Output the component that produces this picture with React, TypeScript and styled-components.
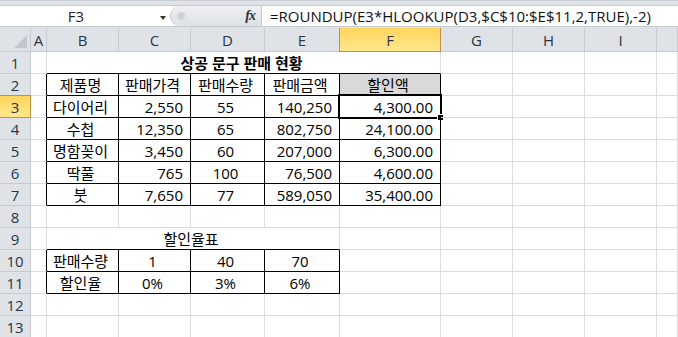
import { createGlobalStyle, styled } from 'styled-components';

const GlobalStyle = createGlobalStyle`
    html, body {
        margin: 0;
        padding: 0;
        background: #ffffff;
        overflow: hidden;
    }
`;

const Frame = styled.div`
    width: 678px;
    height: 337px;
    overflow: hidden;
    display: flex;
    flex-direction: column;
    background: #dfe3e8;
    font-family: "Open Sans", "Noto Sans CJK KR", sans-serif;
`;

const RibbonEdge = styled.div`
    height: 3px;
    background: #eceef1;
    border-bottom: 1px solid #c9ced5;
    display: flex;
`;

const RibbonDivider = styled.div`
    width: 135px;
    border-right: 1px solid #c9ced5;
`;

const FormulaRow = styled.div`
    margin-top: 4px;
    height: 22px;
    display: flex;
    align-items: stretch;
    background: #ffffff;
    border-top: 1px solid #c5cad1;
    border-bottom: 1px solid #c5cad1;
`;

const NameBox = styled.div`
    width: 172px;
    position: relative;
    display: flex;
    align-items: center;
    justify-content: center;
    font-size: 15px;
    color: #1e1e1e;
    padding-right: 20px;
    box-sizing: border-box;
`;

const DropArrow = styled.span`
    position: absolute;
    right: 6px;
    top: 10px;
    width: 0;
    height: 0;
    border-left: 3px solid transparent;
    border-right: 3px solid transparent;
    border-top: 4px solid #333;
`;

const FxPill = styled.div`
    width: 92px;
    display: flex;
    align-items: center;
    justify-content: space-between;
    background: linear-gradient(#eef0f3, #dde1e6);
    border-radius: 12px 0 0 12px;
    border-left: 1px solid #c5cad1;
    border-right: 1px solid #c5cad1;
    margin-left: -2px;
    padding: 0 6px 0 5px;
    box-sizing: border-box;
`;

const Knob = styled.span`
    width: 8px;
    height: 8px;
    border-radius: 50%;
    background: #cfd3d9;
    border: 1px solid #e9ebee;
`;

const FxLabel = styled.span`
    font-family: "Liberation Serif", serif;
    font-style: italic;
    font-weight: 700;
    font-size: 14px;
    color: #333;
    letter-spacing: -1px;
`;

const FormulaText = styled.div`
    flex: 1;
    display: flex;
    align-items: center;
    padding-left: 8px;
    font-size: 15px;
    color: #111;
    white-space: nowrap;
`;

const Sheet = styled.div`
    margin-top: 1px;
    display: grid;
    grid-template-columns: 31px 16px 72px 72px 74px 75px 101px 72px 72px 72px 1fr;
    grid-template-rows: 24px;
    grid-auto-rows: 22px;
    background: #ffffff;
`;

const Corner = styled.div`
    background: #dfe3e8;
    border-right: 1px solid #c5cad1;
    border-bottom: 1px solid #c5cad1;
    position: relative;
    &::after {
        content: '';
        position: absolute;
        right: 3px;
        bottom: 3px;
        border-left: 13px solid transparent;
        border-bottom: 13px solid #c3c8cf;
    }
`;

const ColHead = styled.div<{ $active?: boolean }>`
    display: flex;
    align-items: center;
    justify-content: center;
    font-size: 15px;
    color: #2a3445;
    background: ${(p) => (p.$active ? 'linear-gradient(#ffd55c, #ffe88e)' : '#dfe3e8')};
    border-right: 1px solid ${(p) => (p.$active ? '#c2913f' : '#c5cad1')};
    border-bottom: 1px solid ${(p) => (p.$active ? '#c2913f' : '#c5cad1')};
    border-left: ${(p) => (p.$active ? '1px solid #c2913f' : '0')};
    margin-left: ${(p) => (p.$active ? '-1px' : '0')};
`;

const RowHead = styled.div<{ $active?: boolean }>`
    display: flex;
    align-items: center;
    justify-content: center;
    font-size: 15px;
    color: #2a3445;
    background: ${(p) => (p.$active ? 'linear-gradient(#ffd55c, #ffe88e)' : '#dfe3e8')};
    border-right: 1px solid ${(p) => (p.$active ? '#c2913f' : '#c5cad1')};
    border-bottom: 1px solid ${(p) => (p.$active ? '#c2913f' : '#c5cad1')};
    border-top: ${(p) => (p.$active ? '1px solid #c2913f' : '0')};
    margin-top: ${(p) => (p.$active ? '-1px' : '0')};
`;

type Align = 'left' | 'center' | 'right';

const Cell = styled.div<{
    $align?: Align;
    $span?: number;
    $r?: boolean;
    $b?: boolean;
    $fill?: string;
    $bold?: boolean;
    $active?: boolean;
}>`
    grid-column: span ${(p) => p.$span ?? 1};
    position: relative;
    display: flex;
    align-items: center;
    justify-content: ${(p) =>
        p.$align === 'right' ? 'flex-end' : p.$align === 'center' ? 'center' : 'flex-start'};
    padding: 0 7px 0 3px;
    box-sizing: border-box;
    font-size: 15px;
    font-weight: ${(p) => (p.$bold ? 700 : 400)};
    color: #000;
    white-space: nowrap;
    background: ${(p) => p.$fill ?? 'transparent'};
    border-right: 1px solid ${(p) => (p.$r ? '#000' : '#dadcdd')};
    border-bottom: 1px solid ${(p) => (p.$b ? '#000' : '#dadcdd')};
    ${(p) =>
        p.$active &&
        `
        &::before {
            content: '';
            position: absolute;
            top: -2px;
            left: -2px;
            right: -2px;
            bottom: -2px;
            border: 2px solid #000;
            box-shadow: inset 0 0 0 1px #fff;
            pointer-events: none;
        }
        &::after {
            content: '';
            position: absolute;
            right: -4px;
            bottom: -4px;
            width: 5px;
            height: 5px;
            background: #000;
            border: 1px solid #fff;
        }
    `}
`;

type CellDef = {
    text?: string;
    align?: Align;
    span?: number;
    r?: boolean;
    b?: boolean;
    fill?: string;
    bold?: boolean;
    active?: boolean;
};

const columns = ['A', 'B', 'C', 'D', 'E', 'F', 'G', 'H', 'I', ''];

const products = [
    ['다이어리', '2,550', '55', '140,250', '4,300.00'],
    ['수첩', '12,350', '65', '802,750', '24,100.00'],
    ['명함꽂이', '3,450', '60', '207,000', '6,300.00'],
    ['딱풀', '765', '100', '76,500', '4,600.00'],
    ['붓', '7,650', '77', '589,050', '35,400.00'],
];

const empty = (n: number, opts: Partial<CellDef> = {}): CellDef[] =>
    Array.from({ length: n }, () => ({ ...opts }));

const buildRows = (): CellDef[][] => {
    const rows: CellDef[][] = [];
    // row 1: title centered over B:F
    rows.push([
        {},
        { text: '상공 문구 판매 현황', align: 'center', span: 5, bold: true, b: true },
        ...empty(4),
    ]);
    // row 2: table heads
    rows.push([
        { r: true },
        { text: '제품명', align: 'center', r: true, b: true },
        { text: '판매가격', align: 'center', r: true, b: true },
        { text: '판매수량', align: 'center', r: true, b: true },
        { text: '판매금액', align: 'center', r: true, b: true },
        { text: '할인액', align: 'center', r: true, b: true, fill: '#d9d9d9' },
        ...empty(4),
    ]);
    products.forEach((p, i) => {
        rows.push([
            { r: true },
            { text: p[0], align: 'center', r: true, b: true },
            { text: p[1], align: 'right', r: true, b: true },
            { text: p[2], align: 'center', r: true, b: true },
            { text: p[3], align: 'right', r: true, b: true },
            { text: p[4], align: 'right', r: true, b: true, active: i === 0 },
            ...empty(4),
        ]);
    });
    // row 8
    rows.push(empty(10));
    // row 9: discount table caption over B:E
    rows.push([
        {},
        { text: '할인율표', align: 'center', span: 4, b: true },
        ...empty(5),
    ]);
    rows.push([
        { r: true },
        { text: '판매수량', align: 'center', r: true, b: true },
        { text: '1', align: 'center', r: true, b: true },
        { text: '40', align: 'center', r: true, b: true },
        { text: '70', align: 'center', r: true, b: true },
        ...empty(5),
    ]);
    rows.push([
        { r: true },
        { text: '할인율', align: 'center', r: true, b: true },
        { text: '0%', align: 'center', r: true, b: true },
        { text: '3%', align: 'center', r: true, b: true },
        { text: '6%', align: 'center', r: true, b: true },
        ...empty(5),
    ]);
    rows.push(empty(10));
    rows.push(empty(10));
    return rows;
};

const App = () => {
    const rows = buildRows();

    return (
        <Frame>
            <GlobalStyle />
            <RibbonEdge>
                <RibbonDivider />
            </RibbonEdge>
            <FormulaRow>
                <NameBox>
                    F3
                    <DropArrow />
                </NameBox>
                <FxPill>
                    <Knob />
                    <FxLabel>fx</FxLabel>
                </FxPill>
                <FormulaText>=ROUNDUP(E3*HLOOKUP(D3,$C$10:$E$11,2,TRUE),-2)</FormulaText>
            </FormulaRow>
            <Sheet>
                <Corner />
                {columns.map((c, i) => (
                    <ColHead key={i} $active={c === 'F'}>
                        {c}
                    </ColHead>
                ))}
                {rows.map((row, ri) => [
                    <RowHead key={`h${ri}`} $active={ri === 2}>
                        {ri + 1}
                    </RowHead>,
                    ...row.map((cell, ci) => (
                        <Cell
                            key={`c${ri}-${ci}`}
                            $align={cell.align}
                            $span={cell.span}
                            $r={cell.r}
                            $b={cell.b}
                            $fill={cell.fill}
                            $bold={cell.bold}
                            $active={cell.active}
                        >
                            {cell.text}
                        </Cell>
                    )),
                ])}
            </Sheet>
        </Frame>
    );
};

export default App;
